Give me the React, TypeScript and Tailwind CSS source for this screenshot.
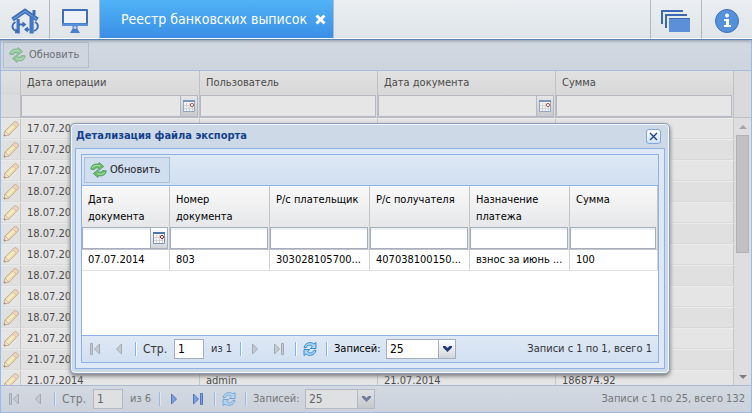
import type { ReactNode } from "react";

const operations = [
  "17.07.2014",
  "17.07.2014",
  "17.07.2014",
  "18.07.2014",
  "18.07.2014",
  "18.07.2014",
  "18.07.2014",
  "18.07.2014",
  "18.07.2014",
  "18.07.2014",
  "21.07.2014",
  "21.07.2014",
];

function HouseIcon() {
  return (
    <svg width="28" height="26" viewBox="0 0 28 26" aria-hidden="true">
      <path d="M21.500 2h3v5h-3z" fill="#3b6bb5" />
      <path d="M1.500 11.500L14 3l12.500 8.500" fill="none" stroke="#3f70ba" strokeWidth="4.500" />
      <path d="M2.500 11L14 3.200 25.500 11" fill="none" stroke="#6799dc" strokeWidth="1.200" />
      <path d="M5.500 11h3.300v14.500H5.500zM18.500 8.500h4.200v17h-4.200z" fill="#4478c3" />
      <g fill="none" stroke="#3b6bb5" strokeWidth="1.800">
        <path d="M4.500 14C.5 16 .3 21 5 23" />
        <path d="M24 14c4 2 4 7-1 9" />
        <path d="M8 16.500h4.500M18.500 21.500h-2.500" />
      </g>
      <path d="M11.500 13.500l4 3-4 3zM4.500 20.500l4 3-4.500 2zM16.800 18.500l-3.800 3 3.800 3z" fill="#3b6bb5" />
    </svg>
  );
}

function MonitorIcon() {
  return (
    <svg width="28" height="26" viewBox="0 0 28 26" aria-hidden="true">
      <path d="M2 1h24q1 0 1 1v15q0 1-1 1H2q-1 0-1-1V2q0-1 1-1z" fill="#3f6fb9" />
      <path d="M1 15.500h26V17q0 1-1 1H2q-1 0-1-1z" fill="#5a90da" />
      <path d="M3 3h22v12H3z" fill="#eef1f5" />
      <path d="M11.500 18h5v3l2.500 4H9l2.500-4z" fill="#4a7dca" />
      <circle cx="14" cy="19.500" r="1.600" fill="#b4cff0" />
    </svg>
  );
}

function WindowsIcon() {
  return (
    <svg width="30" height="24" viewBox="0 0 30 24" aria-hidden="true">
      <path d="M0 1h22v2H2v12H0z" fill="#3b68b0" />
      <path d="M4 5h22v2H6v12H4z" fill="#3b68b0" />
      <path d="M8 9h21v14H8z" fill="#5b8fd8" />
      <path d="M8 9h21v1H8z" fill="#3b68b0" />
    </svg>
  );
}

function InfoIcon() {
  return (
    <svg width="26" height="26" viewBox="0 0 26 26" aria-hidden="true">
      <circle cx="13" cy="13" r="11.500" fill="#5590da" stroke="#3f70ba" />
      <circle cx="13" cy="7.500" r="2" fill="#fff" />
      <path d="M10 11h5v6h2v2h-7v-2h2v-4h-2z" fill="#fff" />
    </svg>
  );
}

function GreenRefresh() {
  return (
    <svg width="17" height="16" viewBox="0 0 17 16" aria-hidden="true">
      <g fill="#6cbf69" stroke="#3a8f4c" strokeWidth=".7" strokeLinejoin="round">
        <path d="M.8 7.300C1 3 5 1.300 9 2.300V.5l4.700 4L9 8.300V6.300C6.500 5.400 5 5.700 4.500 7.500z" />
        <path d="M16.200 8.700c-.2 4.300-4.200 6-8.200 5v1.800l-4.700-4L8 7.700v2c2.500.9 4 .6 4.500-1.200z" />
      </g>
      <path d="M2.300 6C3.300 3.500 6 3 10 3.800M14.700 10.500c-1.500 2-4 2-7.500 1.300" fill="none" stroke="#b4e2af" />
    </svg>
  );
}

function BlueRefresh() {
  return (
    <svg width="16" height="16" viewBox="0 0 16 16" aria-hidden="true">
      <g fill="#a9d6fa" stroke="#2a80d2" strokeWidth=".9" strokeLinejoin="round">
        <path d="M2 6.500C3.500 1.500 8.500.3 12 3l2-1.500v6H8.500l1.800-2.300C8 3.300 5 4 4 6.800z" />
        <path d="M14 9.500c-1.500 5-6.500 6.200-10 3.500l-2 1.500v-6h5.500l-1.800 2.300C8 12.700 11 12 12 9.200z" />
      </g>
    </svg>
  );
}

function CalendarIcon() {
  return (
    <svg width="12" height="12" viewBox="0 0 12 12" aria-hidden="true">
      <path d="M.5.5h11v11H.5z" fill="#fff" stroke="#7d96b8" />
      <path d="M0 0h12v2H0z" fill="#4f77ad" />
      <path d="M3.500 3v8M6.500 3v8M9.500 3v8M1 5.500h10M1 8.500h10" stroke="#d2d2d2" />
      <circle cx="9" cy="5" r="1.600" fill="#fff" stroke="#8a2525" />
    </svg>
  );
}

function PencilIcon() {
  return (
    <svg width="16" height="16" viewBox="0 0 16 16" aria-hidden="true">
      <path d="M1 15l1-5L11 1.200q1.500-1 3.300.5t.5 3.300L6 14z" fill="#eedc9f" stroke="#c3a27a" />
      <path d="M3.700 12L12 3.700" stroke="#faf1c4" strokeWidth="1.800" />
      <path d="M2 10l4 4-5 1z" fill="#efdfcf" stroke="#bd9c7d" strokeWidth=".7" />
      <path d="M1 15l.5-1.800 1.300 1.300z" fill="#665548" />
      <path d="M11 1.200q1.500-1 3.300.5t.5 3.300l-1.500 1.200-4-3.500z" fill="#efd2bb" stroke="#c5a584" strokeWidth=".7" />
    </svg>
  );
}

function PageArrow({ back, bar, active }: { back?: boolean; bar?: boolean; active?: boolean }) {
  return (
    <svg width="12" height="12" viewBox="0 0 12 12" aria-hidden="true">
      <g
        transform={back ? "matrix(-1 0 0 1 12 0)" : undefined}
        fill={active ? "#7e9fdc" : "#c6cacf"}
        stroke={active ? "#4a6fbb" : "#9fa5ad"}
        strokeWidth=".9"
      >
        {bar ? (
          <>
            <path d="M1.500 1v10l5-5z" />
            <path d="M8.500.5h2v11h-2z" />
          </>
        ) : (
          <path d="M3.500 1v10l5-5z" />
        )}
      </g>
    </svg>
  );
}

function RefreshButton({ dim }: { dim?: boolean }) {
  return (
    <button
      type="button"
      className={
        dim
          ? "flex h-[26px] w-[86px] items-center gap-[3px] border border-[#b4bfcc] bg-[#cfd6df] pl-[5px] text-[#6b6f74]"
          : "flex h-[26px] w-[86px] items-center gap-[3px] border border-[#a9c0d8] bg-[#d0def0] pl-[5px] text-[#222]"
      }
    >
      <span className={dim ? "opacity-60" : ""}>
        <GreenRefresh />
      </span>
      Обновить
    </button>
  );
}

function Filter({ label, date, dim }: { label: string; date?: boolean; dim?: boolean }) {
  const edge = dim ? "border-[#b5b8c4]" : "border-[#a5adc0]";
  return (
    <div className="mr-px flex h-[22px]">
      <input
        aria-label={label}
        className={`h-full w-full min-w-0 border px-1 outline-none ${edge} ${
          dim ? "bg-[#e6e6e6]" : "bg-white shadow-[inset_0_2px_2px_#eceef0]"
        }`}
      />
      {date && (
        <button
          type="button"
          aria-label={`${label}: календарь`}
          className={`flex h-full w-[17px] shrink-0 items-center justify-center border border-l-0 ${edge} ${
            dim ? "bg-linear-to-b from-[#e6e6e6] to-[#c8cacd]" : "bg-linear-to-b from-white to-[#d2d6dc]"
          }`}
        >
          <span className={dim ? "opacity-70" : ""}>
            <CalendarIcon />
          </span>
        </button>
      )}
    </div>
  );
}

function Separator({ dim }: { dim?: boolean }) {
  return (
    <span
      className={
        dim
          ? "h-3.5 w-0.5 border-r border-l border-r-[#e2e6ec] border-l-[#96bbe8]"
          : "h-3.5 w-0.5 border-r border-l border-r-white border-l-[#7db4f5]"
      }
    />
  );
}

function IconButton({ label, children }: { label: string; children: ReactNode }) {
  return (
    <button type="button" aria-label={label} className="flex w-6 items-center justify-center">
      {children}
    </button>
  );
}

function Pager({ id, pages, total, dim }: { id: string; pages: number; total: string; dim?: boolean }) {
  const edge = dim ? "border-[#b5b8c4] bg-[#dfe0e2]" : "border-[#a5adc0] bg-white";
  return (
    <div
      className={
        dim
          ? "flex h-[27px] shrink-0 items-center border-t border-[#a9bbd4] bg-linear-to-b from-[#d3d9e1] to-[#cbd2dc] text-[#777]"
          : "flex h-[27px] shrink-0 items-center border-t border-[#8db2e3] bg-linear-to-b from-[#dfe9f5] to-[#d2e0f1] text-[#333]"
      }
    >
      <div className="flex items-center pl-px">
        <IconButton label="Первая страница">
          <PageArrow back bar />
        </IconButton>
        <IconButton label="Предыдущая страница">
          <PageArrow back />
        </IconButton>
      </div>
      <div className="flex items-center pl-1">
        <Separator dim={dim} />
        <label htmlFor={`${id}-page`} className="w-[37px] pl-[6px] text-[12px]">
          Стр.
        </label>
        <input
          id={`${id}-page`}
          defaultValue="1"
          className={`h-5 w-[30px] border px-[3px] text-[12px] outline-none ${edge} ${dim ? "text-[#666]" : "text-black"}`}
        />
        <span className="w-9 pl-[7px]">из {pages}</span>
        <Separator dim={dim} />
      </div>
      <div className="flex items-center pl-px">
        <IconButton label="Следующая страница">
          <PageArrow active={pages > 1} />
        </IconButton>
        <IconButton label="Последняя страница">
          <PageArrow bar active={pages > 1} />
        </IconButton>
      </div>
      <div className="flex items-center pl-1">
        <Separator dim={dim} />
        <span className={dim ? "px-px opacity-60" : "px-px"}>
          <IconButton label="Обновить список">
            <BlueRefresh />
          </IconButton>
        </span>
        <span className="flex pl-[3px]">
          <Separator dim={dim} />
        </span>
        <label htmlFor={`${id}-size`} className={dim ? "w-[58px] pl-[6px]" : "w-[58px] pl-[6px] text-black"}>
          Записей:
        </label>
        <div className={`relative flex h-5 w-[70px] border ${edge}`}>
          <select
            id={`${id}-size`}
            className={`w-full appearance-none bg-transparent pl-[3px] text-[12px] outline-none ${
              dim ? "text-[#666]" : "text-black"
            }`}
          >
            <option>25</option>
          </select>
          <span
            className={`pointer-events-none absolute inset-y-0 right-0 flex w-[17px] items-center justify-center border-l ${
              dim
                ? "border-[#b5b8c4] bg-linear-to-b from-[#e0e1e3] to-[#c5c8cc]"
                : "border-[#a5adc0] bg-linear-to-b from-white to-[#d2d6dc]"
            }`}
          >
            <svg width="9" height="6" viewBox="0 0 9 6" aria-hidden="true">
              <path d="M0 0h2.500l2 2 2-2H9v1.500L4.500 6 0 1.500z" fill={dim ? "#6d7f9c" : "#1f3c74"} />
            </svg>
          </span>
        </div>
      </div>
      <span className="ml-auto pr-[6px]">{total}</span>
    </div>
  );
}

function DetailWindow() {
  const th = "border-r border-[#c5c5c5] px-[6px] pt-[5px] text-left align-top font-normal leading-[17px]";
  const filter = "h-[23px] border-r border-b border-[#c5c5c5] p-0 align-top bg-[#e4e6ea]";
  const td = "h-[21px] whitespace-nowrap border-r border-b border-r-[#d4d4d4] border-b-[#e4e4e4] px-[6px]";
  return (
    <section
      role="dialog"
      aria-labelledby="detail-title"
      className="absolute top-[123px] left-[70px] w-[600px] rounded-[5px] border border-[#8c9fb8] bg-[#cdd9e7] px-1 pb-1 shadow-[inset_0_0_0_1px_#f2f6fb,0_2px_4px_#777]"
    >
      <header className="flex h-6 items-center justify-between pr-1 pl-px">
        <h2 id="detail-title" className="text-[11px] font-bold text-[#15428b]">
          Детализация файла экспорта
        </h2>
        <button
          type="button"
          aria-label="Закрыть окно"
          className="flex h-[15px] w-[15px] items-center justify-center rounded-[3px] border border-[#7fa8dc] bg-linear-to-b from-white to-[#cfe2f8]"
        >
          <svg width="9" height="9" viewBox="0 0 9 9" aria-hidden="true">
            <path d="M1 1l7 7M8 1L1 8" stroke="#20408c" strokeWidth="1.400" />
          </svg>
        </button>
      </header>
      <div className="border border-[#8db2e3] bg-[#dfe8f6] p-[5px]">
        <div className="border border-[#8db2e3] bg-white">
          <div className="flex h-[31px] items-center border-b border-[#8db2e3] bg-linear-to-b from-[#dfe9f5] to-[#d0dff1] px-0.5">
            <RefreshButton />
          </div>
          <table className="w-full table-fixed border-separate border-spacing-0">
            <colgroup>
              <col className="w-[88px]" />
              <col />
              <col />
              <col />
              <col />
              <col className="w-[88px]" />
            </colgroup>
            <thead>
              <tr className="h-[41px] bg-linear-to-b from-[#f9f9f9] to-[#e6e7e9]">
                <th className={th}>Дата документа</th>
                <th className={th}>Номер документа</th>
                <th className={th}>Р/с плательщик</th>
                <th className={th}>Р/с получателя</th>
                <th className={th}>Назначение платежа</th>
                <th className={th}>Сумма</th>
              </tr>
              <tr>
                <td className={filter}><Filter label="Дата документа" date /></td>
                <td className={filter}><Filter label="Номер документа" /></td>
                <td className={filter}><Filter label="Р/с плательщик" /></td>
                <td className={filter}><Filter label="Р/с получателя" /></td>
                <td className={filter}><Filter label="Назначение платежа" /></td>
                <td className={filter}><Filter label="Сумма" /></td>
              </tr>
            </thead>
            <tbody>
              <tr>
                <td className={td}>07.07.2014</td>
                <td className={td}>803</td>
                <td className={td}>303028105700...</td>
                <td className={td}>407038100150...</td>
                <td className={td}>взнос за июнь ...</td>
                <td className={td}>100</td>
              </tr>
            </tbody>
          </table>
          <div className="h-16" />
          <Pager id="detail" pages={1} total="Записи с 1 по 1, всего 1" />
        </div>
      </div>
    </section>
  );
}

function OperationRow({ cells, striped }: { cells: string[]; striped: boolean }) {
  const td = "h-[21px] border-t border-r border-b border-t-[#ebebeb] border-r-[#c6c6ca] border-b-[#d9d9d9]";
  return (
    <tr className={striped ? "bg-[#e0e0e0]" : "bg-[#e5e5e5]"}>
      <td className={`${td} p-0`}>
        <button type="button" aria-label="Редактировать" className="ml-0.5 block opacity-80">
          <PencilIcon />
        </button>
      </td>
      {cells.map((cell, i) => (
        <td key={i} className={`${td} px-[6px]`}>
          {cell}
        </td>
      ))}
    </tr>
  );
}

export default function App() {
  const th = "h-6 border-r border-[#bfc0c6] px-[6px] py-0 text-left font-normal";
  const filter = "h-[23px] border-r border-b border-[#bfc0c6] bg-[#dcdcdc] p-0 align-top";
  return (
    <div className="relative flex h-screen flex-col overflow-hidden bg-[#e4e4e4] font-['DejaVu_Sans_Condensed','DejaVu_Sans',sans-serif] text-[11px] leading-4 text-black">
      <nav className="z-10 flex h-10 shrink-0 border-b border-[#5f83b3] bg-linear-to-b from-[#ebeff2] to-[#dfe4e8] shadow-[0_1px_3px_#8b97a8]">
        <button type="button" aria-label="Главная" className="flex w-[50px] items-center justify-center border-r border-b border-r-[#b5b9bd] border-b-white pt-1">
          <HouseIcon />
        </button>
        <button type="button" aria-label="Рабочий стол" className="flex w-[50px] items-center justify-center border-r border-b border-r-[#b5b9bd] border-b-white pt-1">
          <MonitorIcon />
        </button>
        <div className="flex w-[234px] items-center gap-2 border-r border-b border-r-[#b5b9bd] border-b-white bg-linear-to-b from-[#50b3f6] to-[#3b8ee6] pl-[21px] text-white">
          <span className="text-[14px] whitespace-nowrap">Реестр банковских выписок</span>
          <button type="button" aria-label="Закрыть вкладку">
            <svg width="11" height="11" viewBox="0 0 11 11" aria-hidden="true">
              <path d="M1.500 1.500l8 8M9.500 1.500l-8 8" stroke="#fff" strokeWidth="3" />
            </svg>
          </button>
        </div>
        <div className="flex-1 border-b border-white" />
        <button type="button" aria-label="Окна" className="flex w-[51px] items-center justify-center border-b border-l border-b-white border-l-[#b5b9bd] pt-1">
          <WindowsIcon />
        </button>
        <button type="button" aria-label="Информация" className="flex w-[51px] items-center justify-center border-b border-l border-b-white border-l-[#b5b9bd] pt-1">
          <InfoIcon />
        </button>
      </nav>

      <main className="flex min-h-0 flex-1 flex-col border-r border-b border-l border-[#99bbe8]">
        <div className="flex h-[31px] shrink-0 items-start border-b border-[#a6bddb] bg-linear-to-b from-[#d3d9e1] to-[#cdd4de] px-0.5 pt-0.5">
          <RefreshButton dim />
        </div>
        <div className="flex min-h-0 flex-1 overflow-hidden">
          <div className="min-w-0 flex-1 overflow-hidden">
            <table className="w-full table-fixed border-separate border-spacing-0 text-[#4a4a4a]">
              <colgroup>
                <col className="w-5" />
                <col className="w-[179px]" />
                <col />
                <col />
                <col />
              </colgroup>
              <thead>
                <tr className="bg-linear-to-b from-[#e1e1e1] to-[#d8d8d8]">
                  <th className={th} aria-label="Действия" />
                  <th className={th}>Дата операции</th>
                  <th className={th}>Пользователь</th>
                  <th className={th}>Дата документа</th>
                  <th className={th}>Сумма</th>
                </tr>
                <tr>
                  <td className={filter} />
                  <td className={filter}><Filter label="Дата операции" date dim /></td>
                  <td className={filter}><Filter label="Пользователь" dim /></td>
                  <td className={filter}><Filter label="Дата документа" date dim /></td>
                  <td className={filter}><Filter label="Сумма" dim /></td>
                </tr>
              </thead>
              <tbody>
                {operations.map((date, i) => (
                  <OperationRow key={i} striped={i % 2 === 1} cells={[date, "", "", ""]} />
                ))}
                <OperationRow striped={false} cells={["21.07.2014", "admin", "21.07.2014", "186874.92"]} />
              </tbody>
            </table>
          </div>
          <div className="flex w-[17px] flex-col items-center bg-[#dedede]">
            <div className="h-[47px] w-full border-b border-[#bfc0c6] bg-[#dadada]" />
            <div className="flex h-[17px] items-center">
              <svg width="8" height="4" viewBox="0 0 8 4" aria-hidden="true">
                <path d="M0 4l4-4 4 4z" fill="#a5a5a5" />
              </svg>
            </div>
            <div className="h-[118px] w-[13px] border border-[#b2b2b2] bg-[#c1c1c1]" />
            <div className="mt-auto flex h-[17px] items-center">
              <svg width="8" height="4" viewBox="0 0 8 4" aria-hidden="true">
                <path d="M0 0l4 4 4-4z" fill="#7e7e7e" />
              </svg>
            </div>
          </div>
        </div>
        <Pager id="registry" pages={6} total="Записи с 1 по 25, всего 132" dim />
      </main>

      <DetailWindow />
    </div>
  );
}
